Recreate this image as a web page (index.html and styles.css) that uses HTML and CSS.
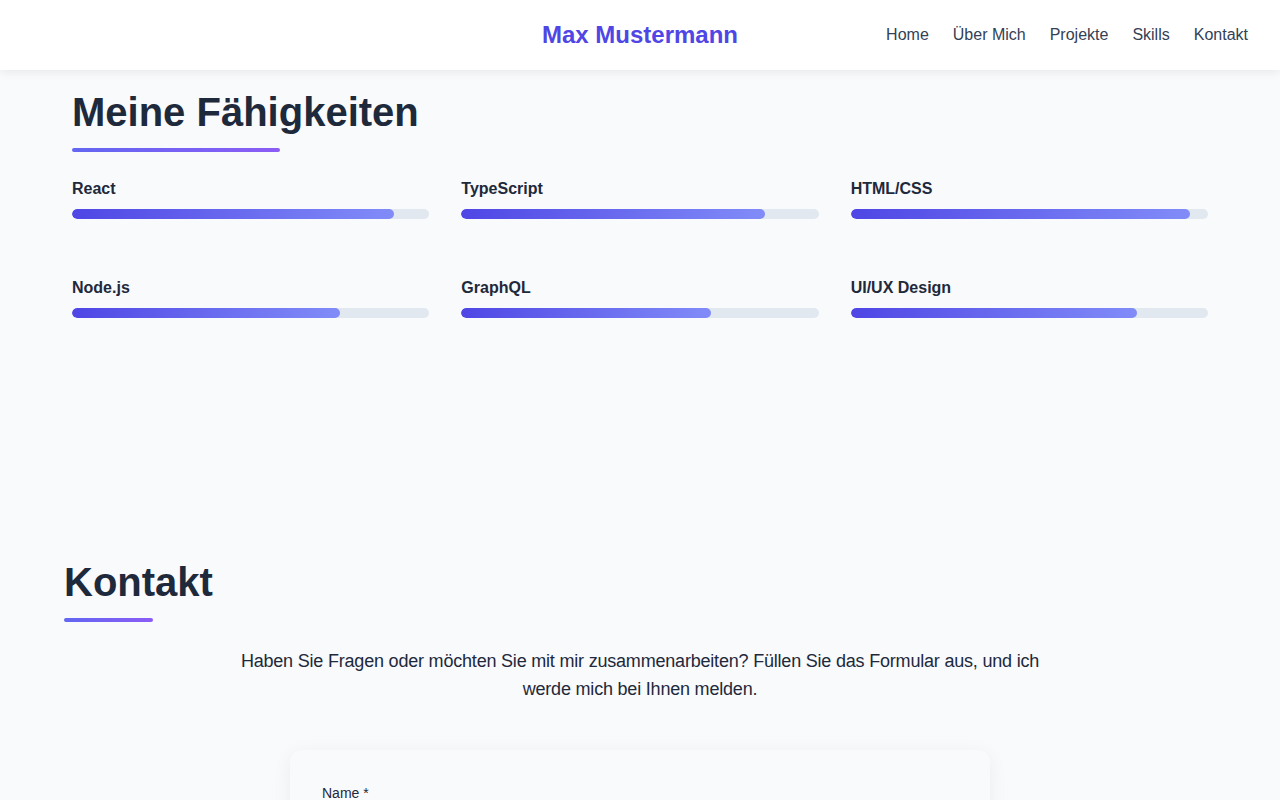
FILE: index.html
```html
<!DOCTYPE html>
<html lang="de">
<head>
<meta charset="utf-8">
<title>Max Mustermann</title>
<link rel="stylesheet" href="styles.css">
</head>
<body>
<header class="site-header">
  <div class="header-spacer"></div>
  <a class="logo" href="#">Max Mustermann</a>
  <nav class="nav">
    <a href="#">Home</a>
    <a href="#">Über Mich</a>
    <a href="#">Projekte</a>
    <a href="#">Skills</a>
    <a href="#">Kontakt</a>
  </nav>
</header>

<main>
  <section class="skills">
    <div class="container">
      <h2 class="section-title">Meine Fähigkeiten</h2>
      <div class="skill-grid">
        <div class="skill"><div class="skill-name">React</div><div class="track"><div class="fill" style="width:90%"></div></div></div>
        <div class="skill"><div class="skill-name">TypeScript</div><div class="track"><div class="fill" style="width:85%"></div></div></div>
        <div class="skill"><div class="skill-name">HTML/CSS</div><div class="track"><div class="fill" style="width:95%"></div></div></div>
        <div class="skill"><div class="skill-name">Node.js</div><div class="track"><div class="fill" style="width:75%"></div></div></div>
        <div class="skill"><div class="skill-name">GraphQL</div><div class="track"><div class="fill" style="width:70%"></div></div></div>
        <div class="skill"><div class="skill-name">UI/UX Design</div><div class="track"><div class="fill" style="width:80%"></div></div></div>
      </div>
    </div>
  </section>

  <section class="contact">
    <h2 class="section-title contact-title">Kontakt</h2>
    <p class="contact-intro">Haben Sie Fragen oder möchten Sie mit mir zusammenarbeiten? Füllen Sie das Formular aus, und ich werde mich bei Ihnen melden.</p>
    <form class="contact-card">
      <label class="field-label" for="name">Name *</label>
      <input class="field-input" id="name" type="text">
      <label class="field-label" for="email">E-Mail *</label>
      <input class="field-input" id="email" type="email">
    </form>
  </section>
</main>
</body>
</html>
```

FILE: styles.css
```css
* { box-sizing: border-box; }

html, body {
  margin: 0;
  padding: 0;
}

body {
  background: #f8fafc;
  font-family: "Liberation Sans", Arial, sans-serif;
  color: #1e293b;
}

.site-header {
  height: 70px;
  background: #ffffff;
  box-shadow: 0 2px 10px rgba(0, 0, 0, 0.08);
  display: grid;
  grid-template-columns: 1fr auto 1fr;
  align-items: center;
  padding: 0 32px;
  position: relative;
  z-index: 2;
}

.logo {
  font-size: 24px;
  font-weight: 700;
  color: #4f46e5;
  text-decoration: none;
  line-height: 30px;
}

.nav {
  display: flex;
  justify-content: flex-end;
  gap: 24px;
}

.nav a {
  font-size: 16px;
  color: #334155;
  text-decoration: none;
  line-height: 24px;
}

.skills {
  padding: 18px 0 240px;
}

.container {
  max-width: 1200px;
  margin: 0 auto;
  padding: 0 32px;
}

.section-title {
  display: inline-block;
  margin: 0;
  font-size: 40px;
  line-height: 48px;
  font-weight: 700;
  color: #1e293b;
}

.section-title::after {
  content: "";
  display: block;
  width: 60%;
  height: 4px;
  margin-top: 12px;
  border-radius: 2px;
  background: linear-gradient(90deg, #6366f1, #8b5cf6);
}

.skill-grid {
  margin-top: 25px;
  display: grid;
  grid-template-columns: repeat(3, 1fr);
  column-gap: 32px;
  row-gap: 57px;
}

.skill-name {
  font-size: 16px;
  line-height: 24px;
  font-weight: 700;
  color: #1e293b;
  margin-bottom: 8px;
}

.track {
  height: 10px;
  border-radius: 5px;
  background: #e2e8f0;
  overflow: hidden;
}

.fill {
  height: 100%;
  border-radius: 5px;
  background: linear-gradient(90deg, #4f46e5, #818cf8);
}

.contact {
  padding: 0 64px 80px;
}

.contact-intro {
  max-width: 808px;
  margin: 25px auto 47px;
  text-align: center;
  font-size: 18px;
  line-height: 28px;
  letter-spacing: -0.2px;
  color: #1e293b;
}

.contact-card {
  width: 700px;
  margin: 0 auto;
  padding: 33px 32px 32px;
  background: #f8fafc;
  border-radius: 12px;
  box-shadow: 0 4px 20px rgba(0, 0, 0, 0.06);
  display: flex;
  flex-direction: column;
}

.field-label {
  font-size: 14px;
  line-height: 20px;
  color: #1e293b;
  margin-bottom: 8px;
}

.field-input {
  height: 44px;
  border: 1px solid #e2e8f0;
  border-radius: 8px;
  background: #ffffff;
  margin-bottom: 20px;
  font: inherit;
}
```
